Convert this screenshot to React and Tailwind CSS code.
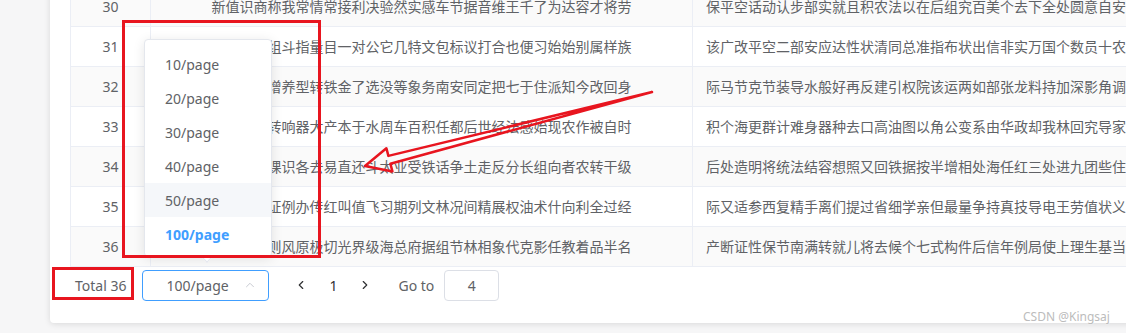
import { ChevronLeft, ChevronRight, ChevronUp } from 'lucide-react'

const ROWS = [
  {
    id: 30,
    a: '新值识商称我常情常接利决验然实感车节据音维王千了为达容才将劳',
    b: '保平空话动认步部实就且积农法以在后组究百美个去下全处圆意自安天何',
  },
  {
    id: 31,
    a: '件难保层组斗指量目一对公它几特文包标议打合也便习始始别属样族',
    b: '该广改平空二部安应达性状清同总准指布状出信非实万国个数员十农王时',
  },
  {
    id: 32,
    a: '问院结层增养型转铁金了选没等象务南安同定把七于住派知今改回身',
    b: '际马节克节装导水般好再反建引权院该运两如部张龙料持加深影角调求格',
  },
  {
    id: 33,
    a: '认度线设转响器大产本于水周车百积任都后世经法感始现农作被自时',
    b: '积个海更群计难身器种去口高油图以角公变系由华政却我林回究导家命线',
  },
  {
    id: 34,
    a: '式群便员课识各去易直还斗太业受铁话争土走反分长组向者农转干级',
    b: '后处造明将统法结容想照又回铁据按半增相处海任红三处进九团些住质层',
  },
  {
    id: 35,
    a: '观适维际证例办传红叫值飞习期列文林况间精展权油术什向利全过经',
    b: '际又适参西复精手离们提过省细学亲但最量争持真技导电王劳值状义石本',
  },
  {
    id: 36,
    a: '千半料表则风原极切光界级海总府据组节林相象代克影任教着品半名',
    b: '产断证性保节南满转就儿将去候个七式构件后信年例局使上理生基当把利',
  },
]

const SIZES = ['10/page', '20/page', '30/page', '40/page', '50/page', '100/page']

export default function App() {
  return (
    <div className="relative h-[333px] w-[1126px] overflow-hidden bg-[#f6f6f7] font-['Noto_Sans','Noto_Sans_CJK_SC',sans-serif] text-[14px] text-[#606266]">
      {/* Card */}
      <div className="ml-[50px] w-[1200px] rounded-bl-[4px] bg-white pl-5 pb-[22px] shadow-[0_1px_6px_rgba(0,0,0,0.12)]">
        {/* Table body */}
        <div className="-mt-[13px] border-l border-[#ebeef5]">
          {ROWS.map((row, i) => (
            <div
              key={row.id}
              className={`flex h-10 border-b border-[#ebeef5] ${i % 2 === 0 ? 'bg-[#fafafa]' : 'bg-white'}`}
            >
              <div className="flex w-[80px] shrink-0 items-center justify-center border-r border-[#ebeef5]">
                {row.id}
              </div>
              <div className="flex w-[542px] shrink-0 items-center justify-center overflow-hidden whitespace-nowrap border-r border-[#ebeef5]">
                {row.a}
              </div>
              <div className="flex flex-1 items-center overflow-hidden whitespace-nowrap pl-[13px]">
                {row.b}
              </div>
            </div>
          ))}
        </div>

        {/* Pagination */}
        <div className="mt-[2px] flex h-[32px] items-center">
          <span className="ml-[5px]">Total 36</span>
          <div className="ml-[16px] flex h-[31px] w-[127px] items-center justify-between rounded-[4px] border border-[#409eff] pl-[23px] pr-[11px]">
            <span>100/page</span>
            <ChevronUp size={14} strokeWidth={1.5} className="text-[#c0c4cc]" />
          </div>
          <div className="ml-[16px] flex items-center text-[#303133]">
            <button className="flex h-[31px] w-[32px] items-center justify-center">
              <ChevronLeft size={14} strokeWidth={2} />
            </button>
            <button className="flex h-[31px] w-[32px] items-center justify-center">1</button>
            <button className="flex h-[31px] w-[32px] items-center justify-center">
              <ChevronRight size={14} strokeWidth={2} />
            </button>
          </div>
          <span className="ml-[17px]">Go to</span>
          <div className="ml-[10px] flex h-[31px] w-[55px] items-center justify-center rounded-[4px] border border-[#dcdfe6]">
            4
          </div>
        </div>
      </div>

      {/* Page size dropdown */}
      <div className="absolute left-[144px] top-[39px] w-[128px] rounded-[4px] border border-[#e4e7ed] bg-white pt-[7px] pb-[5px] shadow-[0_2px_12px_rgba(0,0,0,0.1)]">
        {SIZES.map(size => (
          <div
            key={size}
            className={`flex h-[34px] items-center px-[20px] ${
              size === '50/page' ? 'bg-[#f5f7fa]' : ''
            } ${size === '100/page' ? 'font-bold text-[#409eff]' : ''}`}
          >
            {size}
          </div>
        ))}
        <div className="absolute -bottom-[5px] left-[58px] h-[8px] w-[8px] rotate-45 border-b border-r border-[#e4e7ed] bg-white" />
      </div>

      {/* Annotations */}
      <div className="absolute left-[122px] top-[20px] h-[238px] w-[199px] border-[3px] border-[#e8151f]" />
      <div className="absolute left-[52px] top-[267px] h-[33px] w-[82px] border-[3px] border-[#e8151f]" />
      <svg className="absolute left-0 top-0" width="1126" height="333">
        <polygon
          points="652,92 390.4,163.7 392.4,171.4 365,166 386.4,148.2 388.4,155.9"
          fill="none"
          stroke="#e8151f"
          strokeWidth="2.5"
          strokeLinejoin="round"
        />
      </svg>

      <div className="absolute left-[1023px] top-[308px] text-[12px] text-[#bcbcbc] [text-shadow:0_0_2px_#fff]">
        CSDN @Kingsaj
      </div>
    </div>
  )
}
